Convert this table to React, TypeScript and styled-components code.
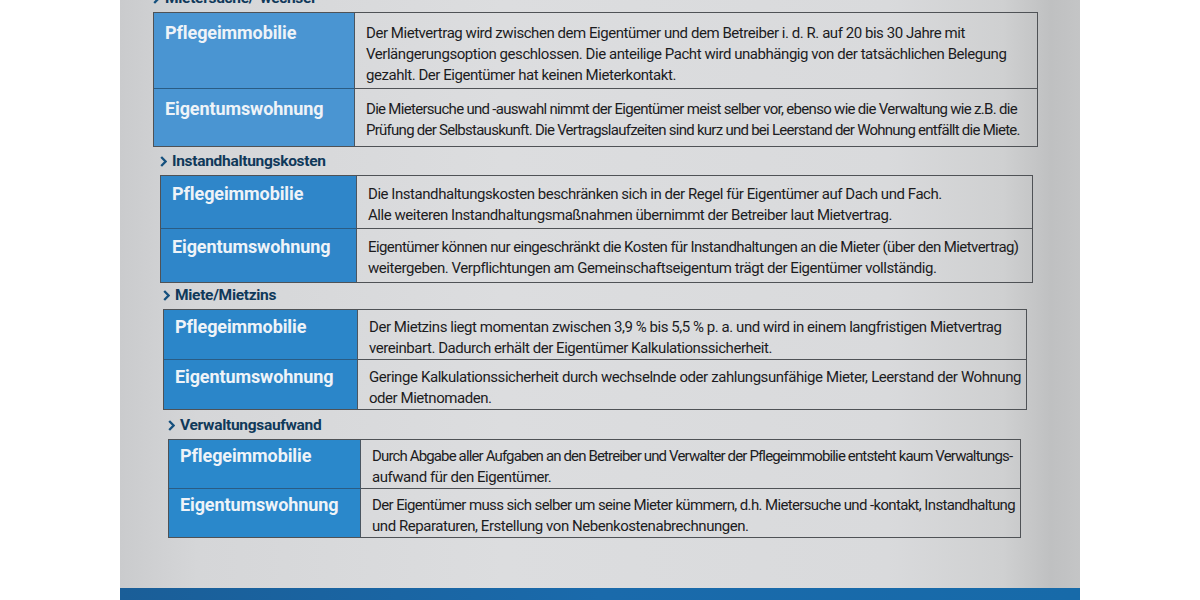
import React from "react";
import styled, { createGlobalStyle } from "styled-components";

const GlobalStyle = createGlobalStyle`
  html, body { margin: 0; padding: 0; background: #ffffff; }
  #root { width: 1200px; height: 600px; }
`;

const FONT = `Roboto, "Liberation Sans", "DejaVu Sans", sans-serif`;

const Page = styled.div`
  width: 1200px;
  height: 600px;
  display: flex;
  justify-content: center;
  background: #ffffff;
  overflow: hidden;
`;

const Paper = styled.div`
  width: 960px;
  height: 600px;
  display: flex;
  flex-direction: column;
  overflow: hidden;
  background: linear-gradient(
    90deg,
    #cacbcd 0%,
    #d5d6d8 8%,
    #dcdddf 40%,
    #d9dadc 80%,
    #cfd0d1 92%,
    #bfc0c1 97%,
    #c4c5c6 100%
  );
  font-family: ${FONT};
  color: #1c1c1e;
`;

const Content = styled.div`
  flex: 1;
  display: flex;
  flex-direction: column;
  margin-top: -14px;
`;

const Section = styled.section<{ $left: number; $right: number; $gap: number }>`
  display: flex;
  flex-direction: column;
  margin: ${(p) => p.$gap}px ${(p) => p.$right}px 0 ${(p) => p.$left}px;
`;

const Heading = styled.h3`
  margin: 0 0 2px 0;
  display: flex;
  align-items: center;
  gap: 5px;
  height: 24px;
  font-size: 15.5px;
  font-weight: 700;
  color: #10395a;
  letter-spacing: -0.3px;
`;

const Chevron = styled.svg`
  width: 7px;
  height: 11px;
  flex: none;
`;

const Table = styled.div<{ $label: number }>`
  display: grid;
  grid-template-columns: ${(p) => p.$label}px minmax(0, 1fr);
  border: 1px solid #4f5256;
  overflow: hidden;
`;

const Label = styled.div<{ $blue: string; $h: number; $pad: number; $last: boolean }>`
  background: ${(p) => p.$blue};
  color: #eef3f8;
  font-weight: 700;
  font-size: 18px;
  line-height: 21px;
  letter-spacing: -0.1px;
  padding: ${(p) => p.$pad}px 0 0 11px;
  min-height: ${(p) => p.$h}px;
  box-sizing: border-box;
  border-right: 1px solid #4a5560;
  border-bottom: ${(p) => (p.$last ? "none" : "1px solid #2a5c84")};
`;

const Cell = styled.div<{ $h: number; $pad: number; $last: boolean }>`
  padding: ${(p) => p.$pad}px 5px 0 11px;
  min-height: ${(p) => p.$h}px;
  box-sizing: border-box;
  font-size: 15px;
  line-height: 21px;
  letter-spacing: -0.45px;
  border-bottom: ${(p) => (p.$last ? "none" : "1px solid #4f5256")};
`;

const Line = styled.div<{ $justify?: boolean; $ls?: number }>`
  white-space: nowrap;
  ${(p) => (p.$ls !== undefined ? `letter-spacing: ${p.$ls}px;` : "")}
  text-align: ${(p) => (p.$justify ? "justify" : "left")};
  text-align-last: ${(p) => (p.$justify ? "justify" : "left")};
`;

const FooterBar = styled.div`
  height: 12px;
  flex: none;
  background: linear-gradient(90deg, #1a5e98 0%, #1a6aab 50%, #176aa9 100%);
`;

type L = { t: string; j?: boolean; ls?: number };
type Row = { label: string; lines: L[]; h: number };
type Sec = {
  title: string;
  left: number;
  right: number;
  gap: number;
  pad: number;
  labelW: number;
  blue: string;
  rows: Row[];
};

const sections: Sec[] = [
  {
    title: "Mietersuche/-wechsel",
    left: 33,
    right: 42,
    gap: 0,
    pad: 10,
    labelW: 201,
    blue: "#4a95d2",
    rows: [
      {
        label: "Pflegeimmobilie",
        h: 76,
        lines: [
          { t: "Der Mietvertrag wird zwischen dem Eigentümer und dem Betreiber i.  d. R. auf 20 bis 30 Jahre mit" },
          { t: "Verlängerungsoption geschlossen. Die anteilige Pacht wird unabhängig von der tatsächlichen Belegung" },
          { t: "gezahlt. Der Eigentümer hat keinen Mieterkontakt." },
        ],
      },
      {
        label: "Eigentumswohnung",
        h: 57,
        lines: [
          { t: "Die Mietersuche und -auswahl nimmt der Eigentümer meist selber vor, ebenso wie die Verwaltung wie z.B. die", ls: -0.7 },
          { t: "Prüfung der Selbstauskunft. Die Vertragslaufzeiten sind kurz und bei Leerstand der Wohnung entfällt die Miete.", ls: -0.74 },
        ],
      },
    ],
  },
  {
    title: "Instandhaltungskosten",
    left: 40,
    right: 47,
    gap: 2,
    pad: 8,
    labelW: 196,
    blue: "#2f86c9",
    rows: [
      {
        label: "Pflegeimmobilie",
        h: 53,
        lines: [
          { t: "Die Instandhaltungskosten beschränken sich in der Regel für Eigentümer auf Dach und Fach." },
          { t: "Alle weiteren Instandhaltungsmaßnahmen übernimmt der Betreiber laut Mietvertrag." },
        ],
      },
      {
        label: "Eigentumswohnung",
        h: 53,
        lines: [
          { t: "Eigentümer können nur eingeschränkt die Kosten für Instandhaltungen an die Mieter (über den Mietvertrag)", ls: -0.58 },
          { t: "weitergeben. Verpflichtungen am Gemeinschaftseigentum trägt der Eigentümer vollständig." },
        ],
      },
    ],
  },
  {
    title: "Miete/Mietzins",
    left: 43,
    right: 53,
    gap: 0,
    pad: 7,
    labelW: 194,
    blue: "#2b86c9",
    rows: [
      {
        label: "Pflegeimmobilie",
        h: 50,
        lines: [
          { t: "Der Mietzins liegt momentan zwischen 3,9 % bis 5,5 %  p. a. und wird in einem langfristigen Mietvertrag" },
          { t: "vereinbart. Dadurch erhält der Eigentümer Kalkulationssicherheit." },
        ],
      },
      {
        label: "Eigentumswohnung",
        h: 49,
        lines: [
          { t: "Geringe Kalkulationssicherheit durch wechselnde oder zahlungsunfähige Mieter, Leerstand der Wohnung", j: true },
          { t: "oder Mietnomaden." },
        ],
      },
    ],
  },
  {
    title: "Verwaltungsaufwand",
    left: 48,
    right: 59,
    gap: 3,
    pad: 6,
    labelW: 192,
    blue: "#2a88cb",
    rows: [
      {
        label: "Pflegeimmobilie",
        h: 48,
        lines: [
          { t: "Durch Abgabe aller Aufgaben an den Betreiber und Verwalter der Pflegeimmobilie entsteht kaum Verwaltungs-", ls: -0.86 },
          { t: "aufwand für den Eigentümer." },
        ],
      },
      {
        label: "Eigentumswohnung",
        h: 48,
        lines: [
          { t: "Der Eigentümer muss sich selber um seine Mieter kümmern, d.h. Mietersuche und -kontakt, Instandhaltung", j: true, ls: -0.66 },
          { t: "und Reparaturen, Erstellung von Nebenkostenabrechnungen." },
        ],
      },
    ],
  },
];

export default function App() {
  return (
    <>
      <GlobalStyle />
      <Page>
        <Paper>
          <Content>
            {sections.map((s) => (
              <Section key={s.title} $left={s.left} $right={s.right} $gap={s.gap}>
                <Heading>
                  <Chevron viewBox="0 0 7 11">
                    <path d="M1.2 1 L5.6 5.5 L1.2 10" fill="none" stroke="#15507e" strokeWidth="2.3" strokeLinejoin="miter" />
                  </Chevron>
                  {s.title}
                </Heading>
                <Table $label={s.labelW}>
                  {s.rows.map((r, i) => {
                    const last = i === s.rows.length - 1;
                    return (
                      <React.Fragment key={r.label}>
                        <Label $blue={s.blue} $h={r.h} $pad={s.pad - 1} $last={last}>
                          {r.label}
                        </Label>
                        <Cell $h={r.h} $pad={s.pad} $last={last}>
                          {r.lines.map((l, k) => (
                            <Line key={k} $justify={l.j} $ls={l.ls}>
                              {l.t}
                            </Line>
                          ))}
                        </Cell>
                      </React.Fragment>
                    );
                  })}
                </Table>
              </Section>
            ))}
          </Content>
          <FooterBar />
        </Paper>
      </Page>
    </>
  );
}
